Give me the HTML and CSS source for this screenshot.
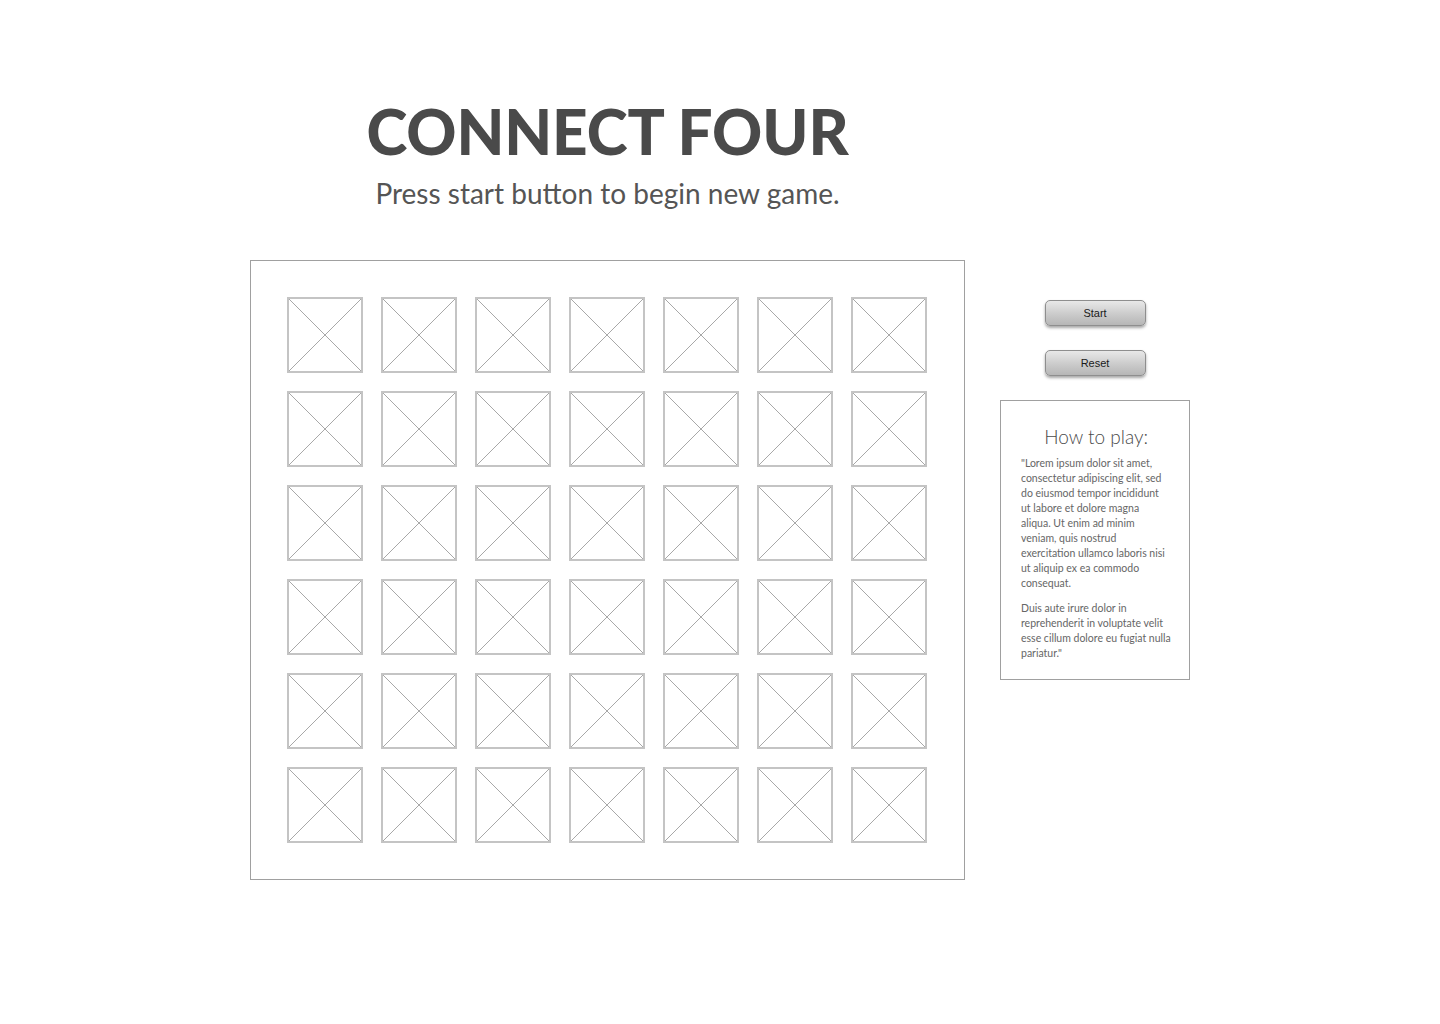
FILE: index.html
```html
<!DOCTYPE html>
<html lang="en">
<head>
<meta charset="utf-8">
<title>Connect Four</title>
<link rel="stylesheet" href="styles.css">
</head>
<body>
<div class="page">
  <div class="layout">
    <div class="main-col">
      <header class="header">
        <h1 class="title">CONNECT FOUR</h1>
        <p class="subtitle">Press start button to begin new game.</p>
      </header>
      <div class="board" id="board"></div>
    </div>
    <aside class="side-col">
      <button class="btn">Start</button>
      <button class="btn">Reset</button>
      <section class="howto">
        <h2 class="howto-title">How to play:</h2>
        <p class="howto-text">"Lorem ipsum dolor sit amet, consectetur adipiscing elit, sed do eiusmod tempor incididunt ut&nbsp;labore et dolore magna aliqua. Ut enim ad minim veniam, quis nostrud exercitation ullamco laboris nisi ut aliquip ex ea commodo consequat.</p>
        <p class="howto-text">Duis aute irure dolor in reprehenderit in voluptate velit esse cillum dolore eu fugiat nulla pariatur."</p>
      </section>
    </aside>
  </div>
</div>
<script>
  var board = document.getElementById('board');
  var svg = '<svg class="x" viewBox="0 0 72 72" preserveAspectRatio="none"><line x1="0" y1="0" x2="72" y2="72"/><line x1="72" y1="0" x2="0" y2="72"/></svg>';
  for (var i = 0; i < 42; i++) {
    var c = document.createElement('div');
    c.className = 'cell';
    c.innerHTML = svg;
    board.appendChild(c);
  }
</script>
</body>
</html>
```

FILE: styles.css
```css
html, body {
  margin: 0;
  padding: 0;
  background: #ffffff;
}

body {
  font-family: Lato, "Open Sans", "Liberation Sans", sans-serif;
  color: #4a4a4a;
}

.page {
  width: 1440px;
  min-height: 1024px;
}

.layout {
  display: flex;
  justify-content: center;
  align-items: flex-start;
  gap: 35px;
}

.main-col {
  display: flex;
  flex-direction: column;
  align-items: center;
}

.header {
  display: flex;
  flex-direction: column;
  align-items: center;
  padding-top: 99px;
  margin-bottom: 51px;
}

.title {
  margin: 0;
  font-family: Lato, "Open Sans", sans-serif;
  font-weight: 900;
  font-size: 62px;
  line-height: 64px;
  letter-spacing: -0.1px;
  color: #4a4a4a;
}

.subtitle {
  margin: 14px 0 0;
  font-family: Lato, "Open Sans", sans-serif;
  font-weight: 400;
  font-size: 28px;
  line-height: 32px;
  color: #555555;
}

.board {
  width: 715px;
  height: 620px;
  box-sizing: border-box;
  border: 1px solid #a0a0a0;
  padding: 36px 37px 36px 36px;
  display: grid;
  grid-template-columns: repeat(7, 76px);
  grid-template-rows: repeat(6, 76px);
  column-gap: 18px;
  row-gap: 18px;
}

.cell {
  width: 76px;
  height: 76px;
  box-sizing: border-box;
  border: 2px solid #c4c4c4;
}

.x {
  display: block;
  width: 72px;
  height: 72px;
}

.x line {
  stroke: #a8a8a8;
  stroke-width: 1;
}

.side-col {
  width: 190px;
  padding-top: 300px;
  display: flex;
  flex-direction: column;
  align-items: center;
}

.btn {
  width: 101px;
  height: 26px;
  margin: 0 0 24px;
  padding: 0;
  border: 1px solid #8e8e8e;
  border-radius: 5px;
  background: linear-gradient(#e8e8e8, #cbcbcb 55%, #b6b6b6);
  box-shadow: 0 2px 3px rgba(0, 0, 0, 0.35);
  font-family: "Liberation Sans", Arial, sans-serif;
  font-size: 11px;
  color: #1a1a1a;
}

.howto {
  width: 190px;
  height: 280px;
  box-sizing: border-box;
  border: 1px solid #a0a0a0;
  padding: 24px 17.75px 0 20px;
  margin-top: 0;
}

.howto-title {
  margin: 0 0 7px;
  text-align: center;
  font-family: Lato, "Open Sans", sans-serif;
  font-weight: 300;
  font-size: 19px;
  line-height: 24px;
  color: #4a4a4a;
}

.howto-text {
  margin: 0 0 10px;
  font-family: Lato, "Open Sans", sans-serif;
  font-size: 10.5px;
  line-height: 15px;
  color: #666666;
}
```
